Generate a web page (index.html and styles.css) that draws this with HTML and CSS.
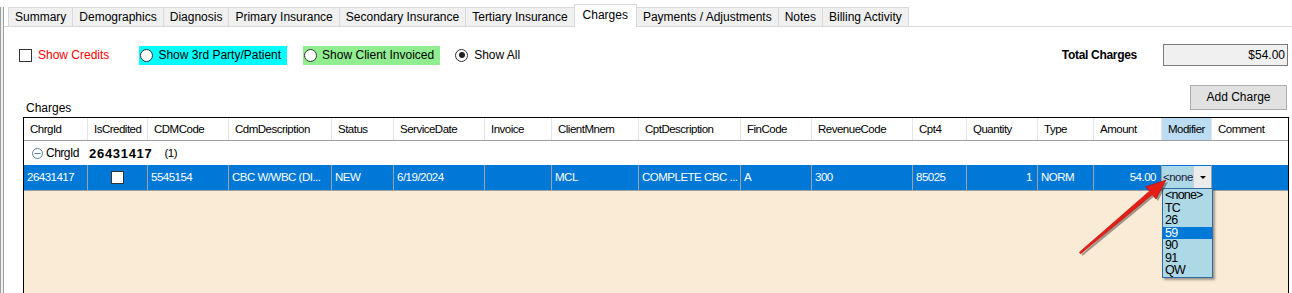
FILE: index.html
```html
<!DOCTYPE html>
<html lang="en">
<head>
  <meta charset="UTF-8" />
  <title>Charges</title>
  <link rel="stylesheet" href="styles.css">
</head>
<body>

  <div class="window">
    <div class="frame-edge"></div>
    <div class="main">

      <div class="tabs">
        <div class="tab">Summary</div>
        <div class="tab">Demographics</div>
        <div class="tab">Diagnosis</div>
        <div class="tab">Primary Insurance</div>
        <div class="tab">Secondary Insurance</div>
        <div class="tab">Tertiary Insurance</div>
        <div class="tab active">Charges</div>
        <div class="tab">Payments / Adjustments</div>
        <div class="tab">Notes</div>
        <div class="tab">Billing Activity</div>
      </div>

      <div class="filters">
        <div class="check"></div>
        <div class="credits">Show Credits</div>
        <div class="opt opt-cyan"><span class="radio"></span>Show 3rd Party/Patient</div>
        <div class="opt opt-green"><span class="radio"></span>Show Client Invoiced</div>
        <div class="opt opt-all"><span class="radio checked"></span>Show All</div>
        <div class="total-label">Total Charges</div>
        <div class="total-box">$54.00</div>
      </div>

      <div class="actions">
        <div class="grid-label">Charges</div>
        <div class="add-button">Add Charge</div>
      </div>

      <div class="grid">
        <div class="grid-head cols">
          <div>ChrgId</div>
          <div>IsCredited</div>
          <div>CDMCode</div>
          <div>CdmDescription</div>
          <div>Status</div>
          <div>ServiceDate</div>
          <div>Invoice</div>
          <div>ClientMnem</div>
          <div>CptDescription</div>
          <div>FinCode</div>
          <div>RevenueCode</div>
          <div>Cpt4</div>
          <div>Quantity</div>
          <div>Type</div>
          <div>Amount</div>
          <div class="sorted">Modifier</div>
          <div>Comment</div>
        </div>

        <div class="group-row">
          <svg class="collapse" width="11" height="11" viewBox="0 0 11 11">
            <circle cx="5.5" cy="5.5" r="5" fill="none" stroke="#5b80a8" stroke-width="1"/>
            <line x1="2.5" y1="5.5" x2="8.5" y2="5.5" stroke="#5b80a8" stroke-width="1"/>
          </svg>
          <span class="group-name">ChrgId</span>
          <span class="group-value">26431417</span>
          <span class="group-count">(1)</span>
        </div>

        <div class="grid-row selected cols">
          <div>26431417</div>
          <div class="center"><span class="cell-check"></span></div>
          <div>5545154</div>
          <div>CBC W/WBC (DI...</div>
          <div>NEW</div>
          <div>6/19/2024</div>
          <div></div>
          <div>MCL</div>
          <div>COMPLETE CBC ...</div>
          <div>A</div>
          <div>300</div>
          <div>85025</div>
          <div class="num">1</div>
          <div>NORM</div>
          <div class="num">54.00</div>
          <div class="modifier-cell">
            <div class="combo">
              <div class="combo-field">&lt;none&gt;</div>
              <div class="combo-button"><span class="combo-arrow"></span></div>
            </div>
            <div class="combo-list">
              <div class="combo-item">&lt;none&gt;</div>
              <div class="combo-item">TC</div>
              <div class="combo-item">26</div>
              <div class="combo-item active">59</div>
              <div class="combo-item">90</div>
              <div class="combo-item">91</div>
              <div class="combo-item">QW</div>
            </div>
          </div>
          <div></div>
        </div>
      </div>

    </div>
  </div>

  <!-- annotation arrow drawn over the screenshot -->
  <svg class="callout" width="110" height="95" viewBox="0 0 110 95">
    <polygon transform="translate(2 2)" fill="#3a2a2a" opacity="0.45"
      points="9.4,82.2 79.4,21.2 75.6,16.8 96,10 86,29 82.2,24.6 10.6,83.8"/>
    <polygon fill="#e41d16" stroke="#b80d08" stroke-width="0.6"
      points="9.4,82.2 79.4,21.2 75.6,16.8 96,10 86,29 82.2,24.6 10.6,83.8"/>
  </svg>

</body>
</html>
```

FILE: styles.css
```css
body {
  margin: 0;
  font-family: "Liberation Sans", Arial, sans-serif;
  font-size: 12px;
  color: #000;
  background-color: #fff;
  overflow: hidden;
}
.window {
  display: flex;
  height: 293px;
}
.frame-edge {
  width: 2px;
  margin-top: 7px;
  background-color: #f0f0f0;
  border-left: 1px solid #a0a0a0;
  border-right: 1px solid #a0a0a0;
}
.main {
  flex: 1;
  min-width: 0;
}

/* tab strip */
.tabs {
  display: flex;
  align-items: flex-end;
  height: 26px;
  padding-left: 4px;
  border-bottom: 1px solid #d9d9d9;
}
.tab {
  height: 18px;
  line-height: 19px;
  padding: 0 6px;
  background-color: #f0f0f0;
  border: 1px solid #d9d9d9;
  border-bottom: none;
  margin-right: -1px;
  white-space: nowrap;
}
.tab.active {
  position: relative;
  height: 22px;
  line-height: 21px;
  padding: 0 8px;
  background-color: #fff;
  margin-bottom: -1px;
}

/* filter row */
.filters {
  display: flex;
  align-items: center;
  height: 22px;
  margin-top: 17px;
  padding: 0 4px 0 15px;
}
.check {
  width: 11px;
  height: 11px;
  border: 1px solid #333;
  background-color: #fff;
}
.credits {
  color: #ff0000;
  margin-left: 6px;
}
.opt {
  display: flex;
  align-items: center;
  gap: 5px;
  height: 19px;
  padding: 0 6px 0 1px;
}
.opt-cyan {
  margin-left: 30px;
  background-color: #00ffff;
}
.opt-green {
  margin-left: 16px;
  background-color: #90ee90;
}
.opt-all {
  margin-left: 14px;
  gap: 6px;
}
.radio {
  width: 11px;
  height: 11px;
  border: 1px solid #333;
  border-radius: 50%;
  background-color: #fff;
  display: flex;
  align-items: center;
  justify-content: center;
}
.radio.checked::after {
  content: "";
  width: 6px;
  height: 6px;
  border-radius: 50%;
  background-color: #222;
}
.total-label {
  margin-left: auto;
  font-weight: bold;
  letter-spacing: -0.3px;
}
.total-box {
  width: 121px;
  height: 20px;
  line-height: 20px;
  margin-left: 26px;
  padding-right: 2px;
  box-sizing: content-box;
  text-align: right;
  background-color: #f0f0f0;
  border: 1px solid #7a7a7a;
}

/* label + button row */
.actions {
  display: flex;
  justify-content: space-between;
  height: 32px;
  margin-top: 19px;
  padding: 0 5px 0 22px;
}
.grid-label {
  align-self: flex-end;
  line-height: 14px;
  margin-bottom: 2px;
}
.add-button {
  width: 95px;
  height: 23px;
  line-height: 23px;
  text-align: center;
  background-color: #e1e1e1;
  border: 1px solid #adadad;
}

/* data grid */
.grid {
  height: 200px;
  margin: 0 3px 0 19px;
  border: 1px solid #000;
  border-bottom: none;
  background-color: #faebd7;
  font-size: 11.5px;
  letter-spacing: -0.5px;
}
.cols {
  display: grid;
  grid-template-columns: 64px 60px 81px 103px 62px 91px 67px 87px 102px 71px 101px 54px 71px 56px 68px 50px 75px;
}
.grid-head {
  height: 22px;
  background-color: #fff;
  border-bottom: 1px solid #a0a0a0;
}
.grid-head div {
  line-height: 22px;
  padding-left: 6px;
  border-right: 1px solid #e4e4e4;
  white-space: nowrap;
  overflow: hidden;
}
.grid-head div:last-child {
  border-right: none;
}
.grid-head .sorted {
  background-color: #bcdcf4;
}
.group-row {
  display: flex;
  align-items: center;
  height: 24px;
  padding-left: 8px;
  background-color: #fff;
}
.collapse {
  margin-right: 3px;
}
.group-name {
  font-size: 12px;
}
.group-value {
  margin-left: 10px;
  font-size: 13px;
  font-weight: bold;
  letter-spacing: 0.7px;
}
.group-count {
  margin-left: 12px;
}
.grid-row {
  height: 25px;
  border-bottom: 1px solid #a0a0a0;
}
.grid-row.selected {
  background-color: #0078d7;
  color: #fff;
}
.grid-row > div {
  line-height: 25px;
  padding: 0 3px;
  border-right: 1px solid #a0a0a0;
  white-space: nowrap;
}
.grid-row > div:last-child {
  border-right: none;
}
.grid-row .num {
  text-align: right;
  padding-right: 5px;
}
.grid-row .center {
  display: flex;
  align-items: center;
  justify-content: center;
}
.cell-check {
  width: 11px;
  height: 11px;
  background-color: #fff;
  border: 1px solid #333;
}

/* modifier combo + open list */
.grid-row .modifier-cell {
  position: relative;
  padding: 0;
}
.combo {
  display: flex;
  height: 22px;
  margin-top: 1px;
}
.combo-field {
  width: 30px;
  overflow: hidden;
  line-height: 22px;
  padding-left: 1px;
  color: #1a1a40;
  background-color: #add8e6;
}
.combo-button {
  flex: 1;
  display: flex;
  align-items: center;
  justify-content: center;
  background-color: #ececec;
  border-left: 1px solid #d0d0d0;
}
.combo-arrow {
  width: 0;
  height: 0;
  border-left: 3px solid transparent;
  border-right: 3px solid transparent;
  border-top: 3px solid #000;
}
.combo-list {
  position: absolute;
  top: 23px;
  left: 0;
  width: 49px;
  border: 1px solid #2e6aa6;
  background-color: #add8e6;
  box-shadow: 2px 2px 2px rgba(0,0,0,0.35);
  color: #000;
  font-size: 12.5px;
  letter-spacing: -0.8px;
  z-index: 2;
}
.combo-item {
  height: 12.5px;
  line-height: 12.5px;
  padding-left: 2px;
}
.combo-item.active {
  background-color: #0078d7;
  color: #fff;
}
.callout {
  position: absolute;
  left: 1070px;
  top: 170px;
  z-index: 3;
}
```
